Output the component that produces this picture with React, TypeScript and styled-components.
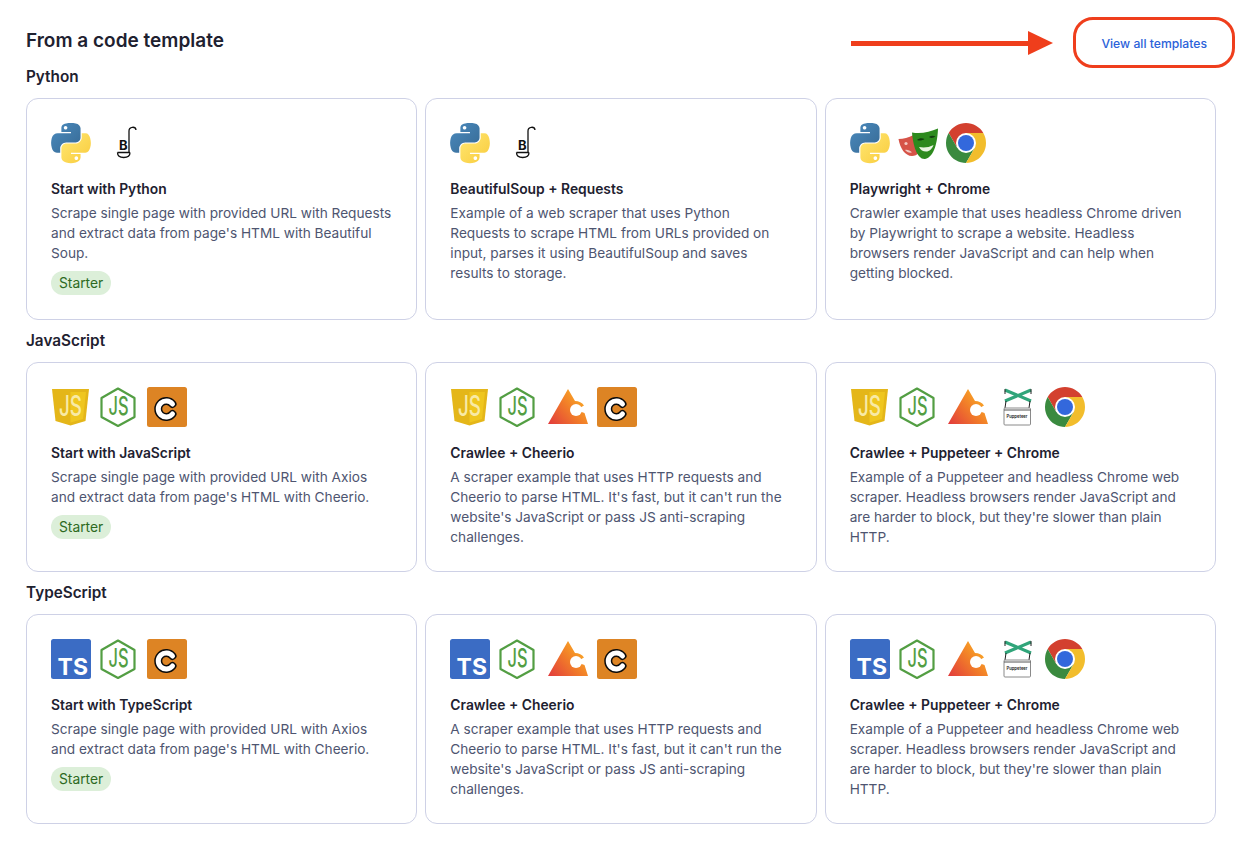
import styled, { createGlobalStyle } from "styled-components";

const GlobalStyle = createGlobalStyle`
  * {
    box-sizing: border-box;
  }
  body {
    margin: 0;
    background: #fff;
    font-family: Inter, "Liberation Sans", sans-serif;
    color: #1e2130;
  }
`;

const Page = styled.main`
  position: relative;
  width: 1257px;
  height: 856px;
  padding: 26px 41px 0 26px;
`;

const Header = styled.header`
  display: flex;
  justify-content: space-between;
  align-items: center;
  height: 28px;
  margin-bottom: 12px;
`;

const Heading = styled.h2`
  margin: 2px 0 0;
  font-size: 19px;
  line-height: 28px;
  font-weight: 600;
`;

const ViewAll = styled.a`
  margin-top: 8px;
  padding: 0 9px;
  font-size: 12.2px;
  line-height: 16px;
  font-weight: 500;
  color: #2b62d9;
`;

const Section = styled.section`
  margin-bottom: 10px;
`;

const SectionTitle = styled.h3`
  margin: 0 0 11px;
  padding-top: 1px;
  font-size: 15.3px;
  line-height: 20px;
  font-weight: 600;
`;

const Grid = styled.div`
  display: grid;
  grid-template-columns: repeat(3, 1fr);
  gap: 8px;
`;

const Card = styled.article`
  padding: 24px;
  border: 1px solid #ced1e6;
  border-radius: 12px;
`;

const Icons = styled.div`
  display: flex;
  gap: 8px;
  height: 40px;
  margin-bottom: 16px;
`;

const CardTitle = styled.h4`
  margin: 0 0 4px;
  font-size: 13.85px;
  line-height: 20px;
  font-weight: 600;
`;

const Description = styled.p`
  margin: 0;
  font-size: 13.65px;
  line-height: 20px;
  color: #4e5570;
`;

const Badge = styled.span`
  display: inline-block;
  margin-top: 8px;
  padding: 0 8px;
  height: 24px;
  border-radius: 12px;
  background: #dcefd9;
  color: #2d6a1f;
  font-size: 13.8px;
  line-height: 24px;
`;

const Svg = styled.svg<{ $width?: number }>`
  display: block;
  flex: none;
  width: ${(p) => p.$width ?? 40}px;
  height: 40px;
  overflow: visible;
`;

const HighlightBox = styled.div`
  position: absolute;
  left: 1073px;
  top: 17px;
  width: 162px;
  height: 51px;
  border: 3.5px solid #ef3e1c;
  border-radius: 20px;
`;

const Arrow = styled.svg`
  position: absolute;
  left: 851px;
  top: 31px;
  width: 202px;
  height: 24px;
`;

type IconName =
  | "python"
  | "soup"
  | "playwright"
  | "chrome"
  | "js"
  | "ts"
  | "node"
  | "cheerio"
  | "crawlee"
  | "puppeteer";

function Icon({ name }: { name: IconName }) {
  switch (name) {
    case "python":
      return (
        <Svg viewBox="12.500 2 103 103">
          <defs>
            <linearGradient id="pyBlue" x1="0" y1="0" x2="1" y2="1">
              <stop offset="0" stopColor="#4b8bbe" />
              <stop offset="1" stopColor="#366994" />
            </linearGradient>
            <linearGradient id="pyYellow" x1="0" y1="0" x2="1" y2="1">
              <stop offset="0" stopColor="#ffe873" />
              <stop offset="1" stopColor="#f9cb3c" />
            </linearGradient>
          </defs>
          <path
            fill="url(#pyBlue)"
            d="M63.391 1.988c-4.222.02-8.252.379-11.8 1.007-10.45 1.846-12.346 5.71-12.346 12.837v9.411h24.693v3.137H29.977c-7.176 0-13.46 4.313-15.426 12.521-2.268 9.405-2.368 15.275 0 25.096 1.755 7.311 5.947 12.519 13.124 12.519h8.491V67.234c0-8.151 7.051-15.34 15.426-15.34h24.665c6.866 0 12.346-5.654 12.346-12.548V15.833c0-6.693-5.646-11.72-12.346-12.837-4.244-.706-8.645-1.027-12.866-1.008zM50.037 9.557c2.55 0 4.634 2.117 4.634 4.721 0 2.593-2.083 4.69-4.634 4.69-2.56 0-4.633-2.097-4.633-4.69-.001-2.604 2.073-4.721 4.633-4.721z"
          />
          <path
            fill="url(#pyYellow)"
            d="M91.682 28.38v10.966c0 8.5-7.208 15.655-15.426 15.655H51.591c-6.756 0-12.346 5.783-12.346 12.549v23.515c0 6.691 5.818 10.628 12.346 12.547 7.816 2.297 15.312 2.713 24.665 0 6.216-1.801 12.346-5.423 12.346-12.547v-9.412H63.938v-3.138h37.012c7.176 0 9.852-5.005 12.348-12.519 2.578-7.735 2.467-15.174 0-25.096-1.774-7.145-5.161-12.521-12.348-12.521h-9.268zM77.809 87.927c2.561 0 4.634 2.097 4.634 4.692 0 2.602-2.074 4.719-4.634 4.719-2.55 0-4.633-2.117-4.633-4.719 0-2.595 2.083-4.692 4.633-4.692z"
          />
        </Svg>
      );
    case "soup":
      return (
        <Svg viewBox="0 0 40 40">
          <path
            d="M18.500 29.500h12.500M18.500 29.500c0 3.500 3 5 6.200 5s6.300-1.500 6.300-5M30 29.500V8c0-4.500 6.500-5 7-1"
            fill="none"
            stroke="#111"
            strokeWidth="1.300"
          />
          <text x="20" y="27" fontSize="13" fontWeight="700" fontFamily="Inter, sans-serif" fill="#111">
            B
          </text>
        </Svg>
      );
    case "playwright":
      return (
        <Svg viewBox="0 0 40 40">
          <path d="M.5 16c5 0 10-1.500 15-4l5 1 1 16c-2.500 3-5 4-7.500 4C7 33 2 25 .5 16z" fill="#d65348" />
          <circle cx="8" cy="20.500" r="1.600" fill="#f3c9c2" />
          <path d="M7 27c2.500-.5 5 .5 7 2.500-3 .5-5.500-.5-7-2.500z" fill="#f3c9c2" />
          <path d="M14 9.500c9 1.500 18-.5 26-4-.5 13-3.500 28.500-13 30.500-8 .5-12-14-13-26.500z" fill="#2d8a1e" />
          <path d="M19 17c2-2 5-2.500 7.500-1-2 1.500-5 2-7.500 1zM31 14c2-1.500 4.500-1.500 6.500-.5-2 1.500-4.500 2-6.500.5z" fill="#123d0e" />
          <path d="M21 24c4.500 1 10 .5 14.500-2-1.500 4-4 6.500-7.500 6.500-3 0-5.500-1.500-7-4.500z" fill="#e9f5e2" />
        </Svg>
      );
    case "chrome":
      return (
        <Svg viewBox="0 0 40 40">
          <path d="M2.680 10A20 20 0 0 1 37.320 10H20L11.340 25z" fill="#d3402f" />
          <path d="M2.680 10A20 20 0 0 0 20 40l8.660-15H11.340z" fill="#3a8a3f" />
          <path d="M20 40A20 20 0 0 0 37.320 10H20l8.660 15z" fill="#f2bd2c" />
          <circle cx="20" cy="20" r="10" fill="#fff" />
          <circle cx="20" cy="20" r="8" fill="#3368dc" />
        </Svg>
      );
    case "js":
      return (
        <Svg viewBox="0 0 40 40">
          <path d="M1 2h37l-3.500 32L19.500 38.500 4.500 34z" fill="#e4b619" />
          <path d="M19.500 5H35l-3 27-12.500 3.500z" fill="#efc61f" />
          <text
            x="19.500"
            y="29"
            textAnchor="middle"
            fontSize="28"
            fontWeight="500"
            fontFamily="Inter, sans-serif"
            fill="#f8eaa6"
            textLength="23"
            lengthAdjust="spacingAndGlyphs"
          >
            JS
          </text>
        </Svg>
      );
    case "ts":
      return (
        <Svg viewBox="0 0 40 40">
          <rect width="40" height="40" rx="2.500" fill="#3b6cc4" />
          <text
            x="37"
            y="36"
            textAnchor="end"
            fontSize="23"
            fontWeight="700"
            fontFamily="Inter, sans-serif"
            fill="#fff"
          >
            TS
          </text>
        </Svg>
      );
    case "node":
      return (
        <Svg viewBox="0 0 40 40">
          <path
            d="M19 1.500 35.500 11v19L19 39 2.500 30V11z"
            fill="none"
            stroke="#539e43"
            strokeWidth="2.200"
            strokeLinejoin="round"
          />
          <text
            x="19.500"
            y="28"
            textAnchor="middle"
            fontSize="25"
            fontWeight="500"
            fontFamily="Inter, sans-serif"
            fill="#539e43"
            textLength="20"
            lengthAdjust="spacingAndGlyphs"
          >
            JS
          </text>
        </Svg>
      );
    case "cheerio":
      return (
        <Svg viewBox="0 0 40 40">
          <rect width="40" height="40" rx="2.500" fill="#dd8424" />
          <path d="M25.500 17A8 8 0 1 0 25.500 27" fill="none" stroke="#0b0b0b" strokeWidth="8" strokeLinecap="round" />
          <path d="M25.500 17A8 8 0 1 0 25.500 27" fill="none" stroke="#fff" strokeWidth="5" strokeLinecap="round" />
        </Svg>
      );
    case "crawlee":
      return (
        <Svg viewBox="-2 0 43 40" $width={43}>
          <defs>
            <linearGradient id="crawleeFill" gradientUnits="userSpaceOnUse" x1="2" y1="38" x2="34" y2="10">
              <stop offset="0" stopColor="#e23c3c" />
              <stop offset="0.550" stopColor="#f0782a" />
              <stop offset="1" stopColor="#f9a825" />
            </linearGradient>
          </defs>
          <path
            d="M20 2 27 14C31 14 34 15.500 36 18.500L28 23 36.500 26 40 37H0z"
            fill="url(#crawleeFill)"
          />
          <circle cx="28" cy="23" r="6" fill="#fff" />
        </Svg>
      );
    case "puppeteer":
      return (
        <Svg viewBox="0 0 40 40">
          <path d="M8 3 34 14M34 3 8 14" stroke="#30a57a" strokeWidth="3" />
          <path d="M8 2v5M34 2v5M9 14l-1 7M33 14l-1 7" stroke="#222" strokeWidth="1" />
          <rect x="7" y="21" width="26.500" height="17" rx="1" fill="#fff" stroke="#8a8a8a" />
          <path d="M7 23h26.500" stroke="#555" strokeWidth="1" />
          <text
            x="20"
            y="31"
            textAnchor="middle"
            fontSize="4.200"
            fontFamily="Inter, sans-serif"
            fontWeight="600"
            fill="#222"
          >
            Puppeteer
          </text>
        </Svg>
      );
  }
}

interface ITemplate {
  title: string;
  description: string;
  icons: IconName[];
  starter?: boolean;
}

const AXIOS_DESC =
  "Scrape single page with provided URL with Axios and extract data from page's HTML with Cheerio.";
const CHEERIO_DESC =
  "A scraper example that uses HTTP requests and Cheerio to parse HTML. It's fast, but it can't run the website's JavaScript or pass JS anti-scraping challenges.";
const PUPPETEER_DESC =
  "Example of a Puppeteer and headless Chrome web scraper. Headless browsers render JavaScript and are harder to block, but they're slower than plain HTTP.";

const sections: { name: string; templates: ITemplate[] }[] = [
  {
    name: "Python",
    templates: [
      {
        title: "Start with Python",
        description:
          "Scrape single page with provided URL with Requests and extract data from page's HTML with Beautiful Soup.",
        icons: ["python", "soup"],
        starter: true,
      },
      {
        title: "BeautifulSoup + Requests",
        description:
          "Example of a web scraper that uses Python Requests to scrape HTML from URLs provided on input, parses it using BeautifulSoup and saves results to storage.",
        icons: ["python", "soup"],
      },
      {
        title: "Playwright + Chrome",
        description:
          "Crawler example that uses headless Chrome driven by Playwright to scrape a website. Headless browsers render JavaScript and can help when getting blocked.",
        icons: ["python", "playwright", "chrome"],
      },
    ],
  },
  {
    name: "JavaScript",
    templates: [
      {
        title: "Start with JavaScript",
        description: AXIOS_DESC,
        icons: ["js", "node", "cheerio"],
        starter: true,
      },
      {
        title: "Crawlee + Cheerio",
        description: CHEERIO_DESC,
        icons: ["js", "node", "crawlee", "cheerio"],
      },
      {
        title: "Crawlee + Puppeteer + Chrome",
        description: PUPPETEER_DESC,
        icons: ["js", "node", "crawlee", "puppeteer", "chrome"],
      },
    ],
  },
  {
    name: "TypeScript",
    templates: [
      {
        title: "Start with TypeScript",
        description: AXIOS_DESC,
        icons: ["ts", "node", "cheerio"],
        starter: true,
      },
      {
        title: "Crawlee + Cheerio",
        description: CHEERIO_DESC,
        icons: ["ts", "node", "crawlee", "cheerio"],
      },
      {
        title: "Crawlee + Puppeteer + Chrome",
        description: PUPPETEER_DESC,
        icons: ["ts", "node", "crawlee", "puppeteer", "chrome"],
      },
    ],
  },
];

export default function App() {
  return (
    <>
      <GlobalStyle />
      <Page>
        <Header>
          <Heading>From a code template</Heading>
          <ViewAll>View all templates</ViewAll>
        </Header>
        {sections.map((section) => (
          <Section key={section.name}>
            <SectionTitle>{section.name}</SectionTitle>
            <Grid>
              {section.templates.map((template) => (
                <Card key={template.title}>
                  <Icons>
                    {template.icons.map((icon) => (
                      <Icon key={icon} name={icon} />
                    ))}
                  </Icons>
                  <CardTitle>{template.title}</CardTitle>
                  <Description>{template.description}</Description>
                  {template.starter && <Badge>Starter</Badge>}
                </Card>
              ))}
            </Grid>
          </Section>
        ))}
        {/* Annotation drawn over the page */}
        <Arrow viewBox="0 0 202 24">
          <path d="M0 12.500h178" stroke="#ef3e1c" strokeWidth="5" />
          <path d="M177 0l25 12-25 12z" fill="#ef3e1c" />
        </Arrow>
        <HighlightBox />
      </Page>
    </>
  );
}
